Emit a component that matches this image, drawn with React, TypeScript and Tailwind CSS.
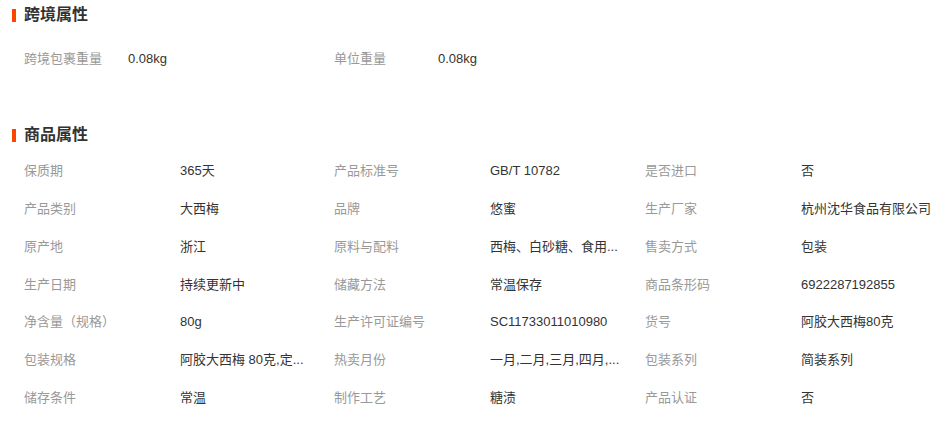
import React from "react";

type Pair = [string, string];

const crossBorder: Pair[] = [
  ["跨境包裹重量", "0.08kg"],
  ["单位重量", "0.08kg"],
];

const goods: Pair[] = [
  ["保质期", "365天"],
  ["产品标准号", "GB/T 10782"],
  ["是否进口", "否"],
  ["产品类别", "大西梅"],
  ["品牌", "悠蜜"],
  ["生产厂家", "杭州沈华食品有限公司"],
  ["原产地", "浙江"],
  ["原料与配料", "西梅、白砂糖、食用..."],
  ["售卖方式", "包装"],
  ["生产日期", "持续更新中"],
  ["储藏方法", "常温保存"],
  ["商品条形码", "6922287192855"],
  ["净含量（规格）", "80g"],
  ["生产许可证编号", "SC11733011010980"],
  ["货号", "阿胶大西梅80克"],
  ["包装规格", "阿胶大西梅 80克,定..."],
  ["热卖月份", "一月,二月,三月,四月,..."],
  ["包装系列", "简装系列"],
  ["储存条件", "常温"],
  ["制作工艺", "糖渍"],
  ["产品认证", "否"],
];

function Heading({ title }: { title: string }) {
  return (
    <div className="flex items-center h-[30px]">
      <span className="w-[4px] h-[13px] bg-[#ff4400] ml-[12px] mr-[8px]" />
      <h2 className="text-[16px] font-bold text-[#333]">{title}</h2>
    </div>
  );
}

export default function App() {
  return (
    <div
      className="w-[944px] h-[421px] bg-white overflow-hidden text-[13px]"
      style={{ fontFamily: '"Liberation Sans", "Noto Sans CJK SC", sans-serif' }}
    >
      <Heading title="跨境属性" />
      <div className="flex pl-[24px] mt-[10px]">
        {crossBorder.map(([label, value]) => (
          <div key={label} className="flex items-center h-[38px] w-[310px]">
            <span className="w-[104px] text-[#999]">{label}</span>
            <span className="text-[#333]">{value}</span>
          </div>
        ))}
      </div>

      <div className="mt-[42px]">
        <Heading title="商品属性" />
      </div>
      <div className="grid grid-cols-[310px_311px_310px] pl-[24px] mt-[2px]">
        {goods.map(([label, value]) => (
          <div key={label} className="flex items-center h-[37.8px]">
            <span className="w-[156px] shrink-0 text-[#999]">{label}</span>
            <span className="text-[#333] whitespace-nowrap">{value}</span>
          </div>
        ))}
      </div>
    </div>
  );
}
